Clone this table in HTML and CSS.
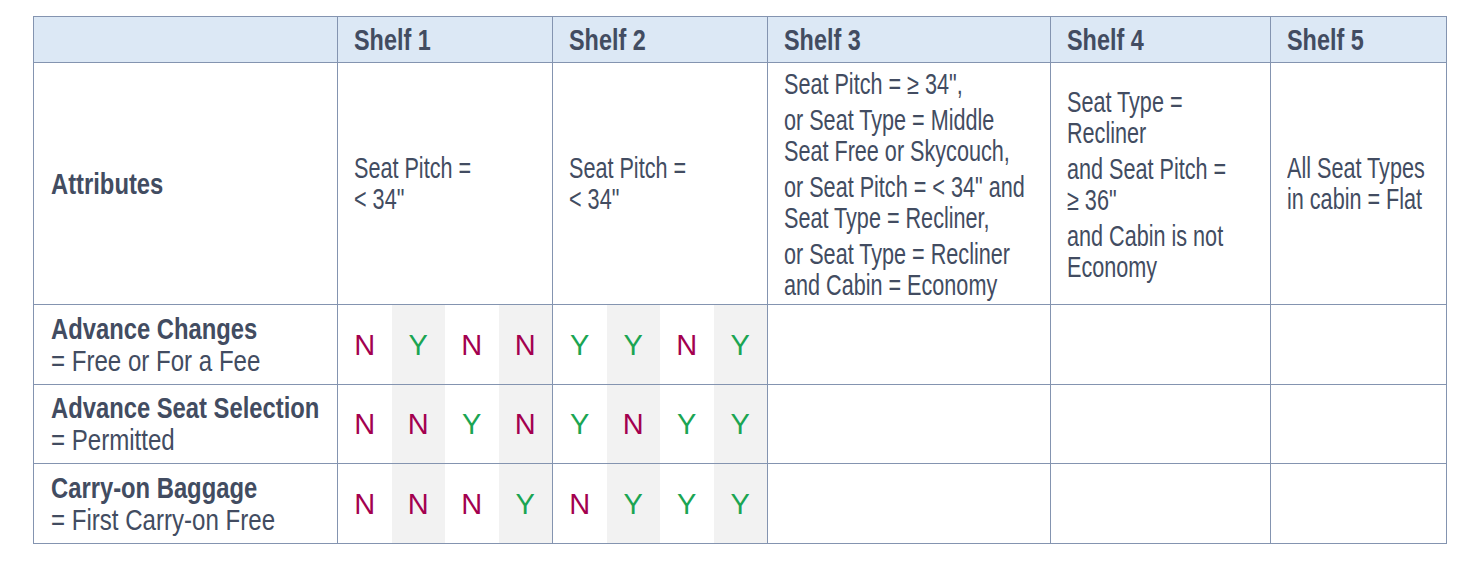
FILE: index.html
```html
<!DOCTYPE html>
<html lang="en">
<head>
<meta charset="utf-8">
<title>Shelves</title>
<link rel="stylesheet" href="styles.css">
</head>
<body>
<div class="table">
  <div class="cell head"></div>
  <div class="cell head"><div class="hd">Shelf 1</div></div>
  <div class="cell head"><div class="hd">Shelf 2</div></div>
  <div class="cell head"><div class="hd">Shelf 3</div></div>
  <div class="cell head"><div class="hd">Shelf 4</div></div>
  <div class="cell head"><div class="hd">Shelf 5</div></div>

  <div class="cell label"><div class="b">Attributes</div></div>
  <div class="cell attr"><div class="p">Seat Pitch =<br>&lt; 34"</div></div>
  <div class="cell attr"><div class="p">Seat Pitch =<br>&lt; 34"</div></div>
  <div class="cell attr multi">
    <div class="p">Seat Pitch = ≥ 34",</div>
    <div class="p">or Seat Type = Middle<br>Seat Free or Skycouch,</div>
    <div class="p">or Seat Pitch = &lt; 34" and<br>Seat Type = Recliner,</div>
    <div class="p">or Seat Type = Recliner<br>and Cabin = Economy</div>
  </div>
  <div class="cell attr multi">
    <div class="p">Seat Type =<br>Recliner</div>
    <div class="p">and Seat Pitch =<br>≥ 36"</div>
    <div class="p">and Cabin is not<br>Economy</div>
  </div>
  <div class="cell attr"><div class="p">All Seat Types<br>in cabin = Flat</div></div>

  <div class="cell label"><div class="b">Advance Changes</div><div class="r">= Free or For a Fee</div></div>
  <div class="cell yn"><span class="n">N</span><span class="y">Y</span><span class="n">N</span><span class="n">N</span></div>
  <div class="cell yn"><span class="y">Y</span><span class="y">Y</span><span class="n">N</span><span class="y">Y</span></div>
  <div class="cell"></div>
  <div class="cell"></div>
  <div class="cell"></div>

  <div class="cell label"><div class="b">Advance Seat Selection</div><div class="r">= Permitted</div></div>
  <div class="cell yn"><span class="n">N</span><span class="n">N</span><span class="y">Y</span><span class="n">N</span></div>
  <div class="cell yn"><span class="y">Y</span><span class="n">N</span><span class="y">Y</span><span class="y">Y</span></div>
  <div class="cell"></div>
  <div class="cell"></div>
  <div class="cell"></div>

  <div class="cell label"><div class="b">Carry-on Baggage</div><div class="r">= First Carry-on Free</div></div>
  <div class="cell yn"><span class="n">N</span><span class="n">N</span><span class="n">N</span><span class="y">Y</span></div>
  <div class="cell yn"><span class="n">N</span><span class="y">Y</span><span class="y">Y</span><span class="y">Y</span></div>
  <div class="cell"></div>
  <div class="cell"></div>
  <div class="cell"></div>
</div>
</body>
</html>
```

FILE: styles.css
```css
html, body {
  margin: 0;
  padding: 0;
  background: #ffffff;
}

body {
  padding: 16px 0 0 33px;
  font-family: "Liberation Sans", Arial, sans-serif;
  color: #424c61;
}

.table {
  display: grid;
  grid-template-columns: 304px 215px 215px 283px 220px 176px;
  grid-template-rows: 46px 242px 80px 79px 80px;
  width: 1414px;
  border-top: 1px solid #8494b0;
  border-left: 1px solid #8494b0;
  box-sizing: border-box;
}

.cell {
  box-sizing: border-box;
  border-right: 1px solid #8494b0;
  border-bottom: 1px solid #8494b0;
  padding-left: 16px;
  display: flex;
  flex-direction: column;
  justify-content: center;
  min-width: 0;
  overflow: visible;
}

.head {
  background: #dce8f5;
}

.hd {
  font-size: 30px;
  font-weight: bold;
  line-height: 34px;
  width: max-content;
  transform: scaleX(0.78);
  transform-origin: left center;
}

.label {
  padding-left: 17px;
}

.b {
  font-size: 29px;
  font-weight: bold;
  line-height: 32px;
  width: max-content;
  transform: scaleX(0.82);
  transform-origin: left center;
}

.r {
  font-size: 29px;
  line-height: 32px;
  width: max-content;
  transform: scaleX(0.83);
  transform-origin: left center;
}

.attr {
  gap: 5px;
}

.multi {
  padding-top: 3px;
}

.p {
  font-size: 29px;
  line-height: 31px;
  width: max-content;
  transform: scaleX(0.745);
  transform-origin: left center;
}

.yn {
  padding-left: 0;
  display: grid;
  grid-template-columns: repeat(4, 1fr);
}

.yn span {
  display: flex;
  align-items: center;
  justify-content: center;
  font-size: 29px;
  line-height: 32px;
}

.yn span:nth-child(even) {
  background: #f2f2f2;
}

.n {
  color: #a3004f;
}

.y {
  color: #1ba553;
}
```
